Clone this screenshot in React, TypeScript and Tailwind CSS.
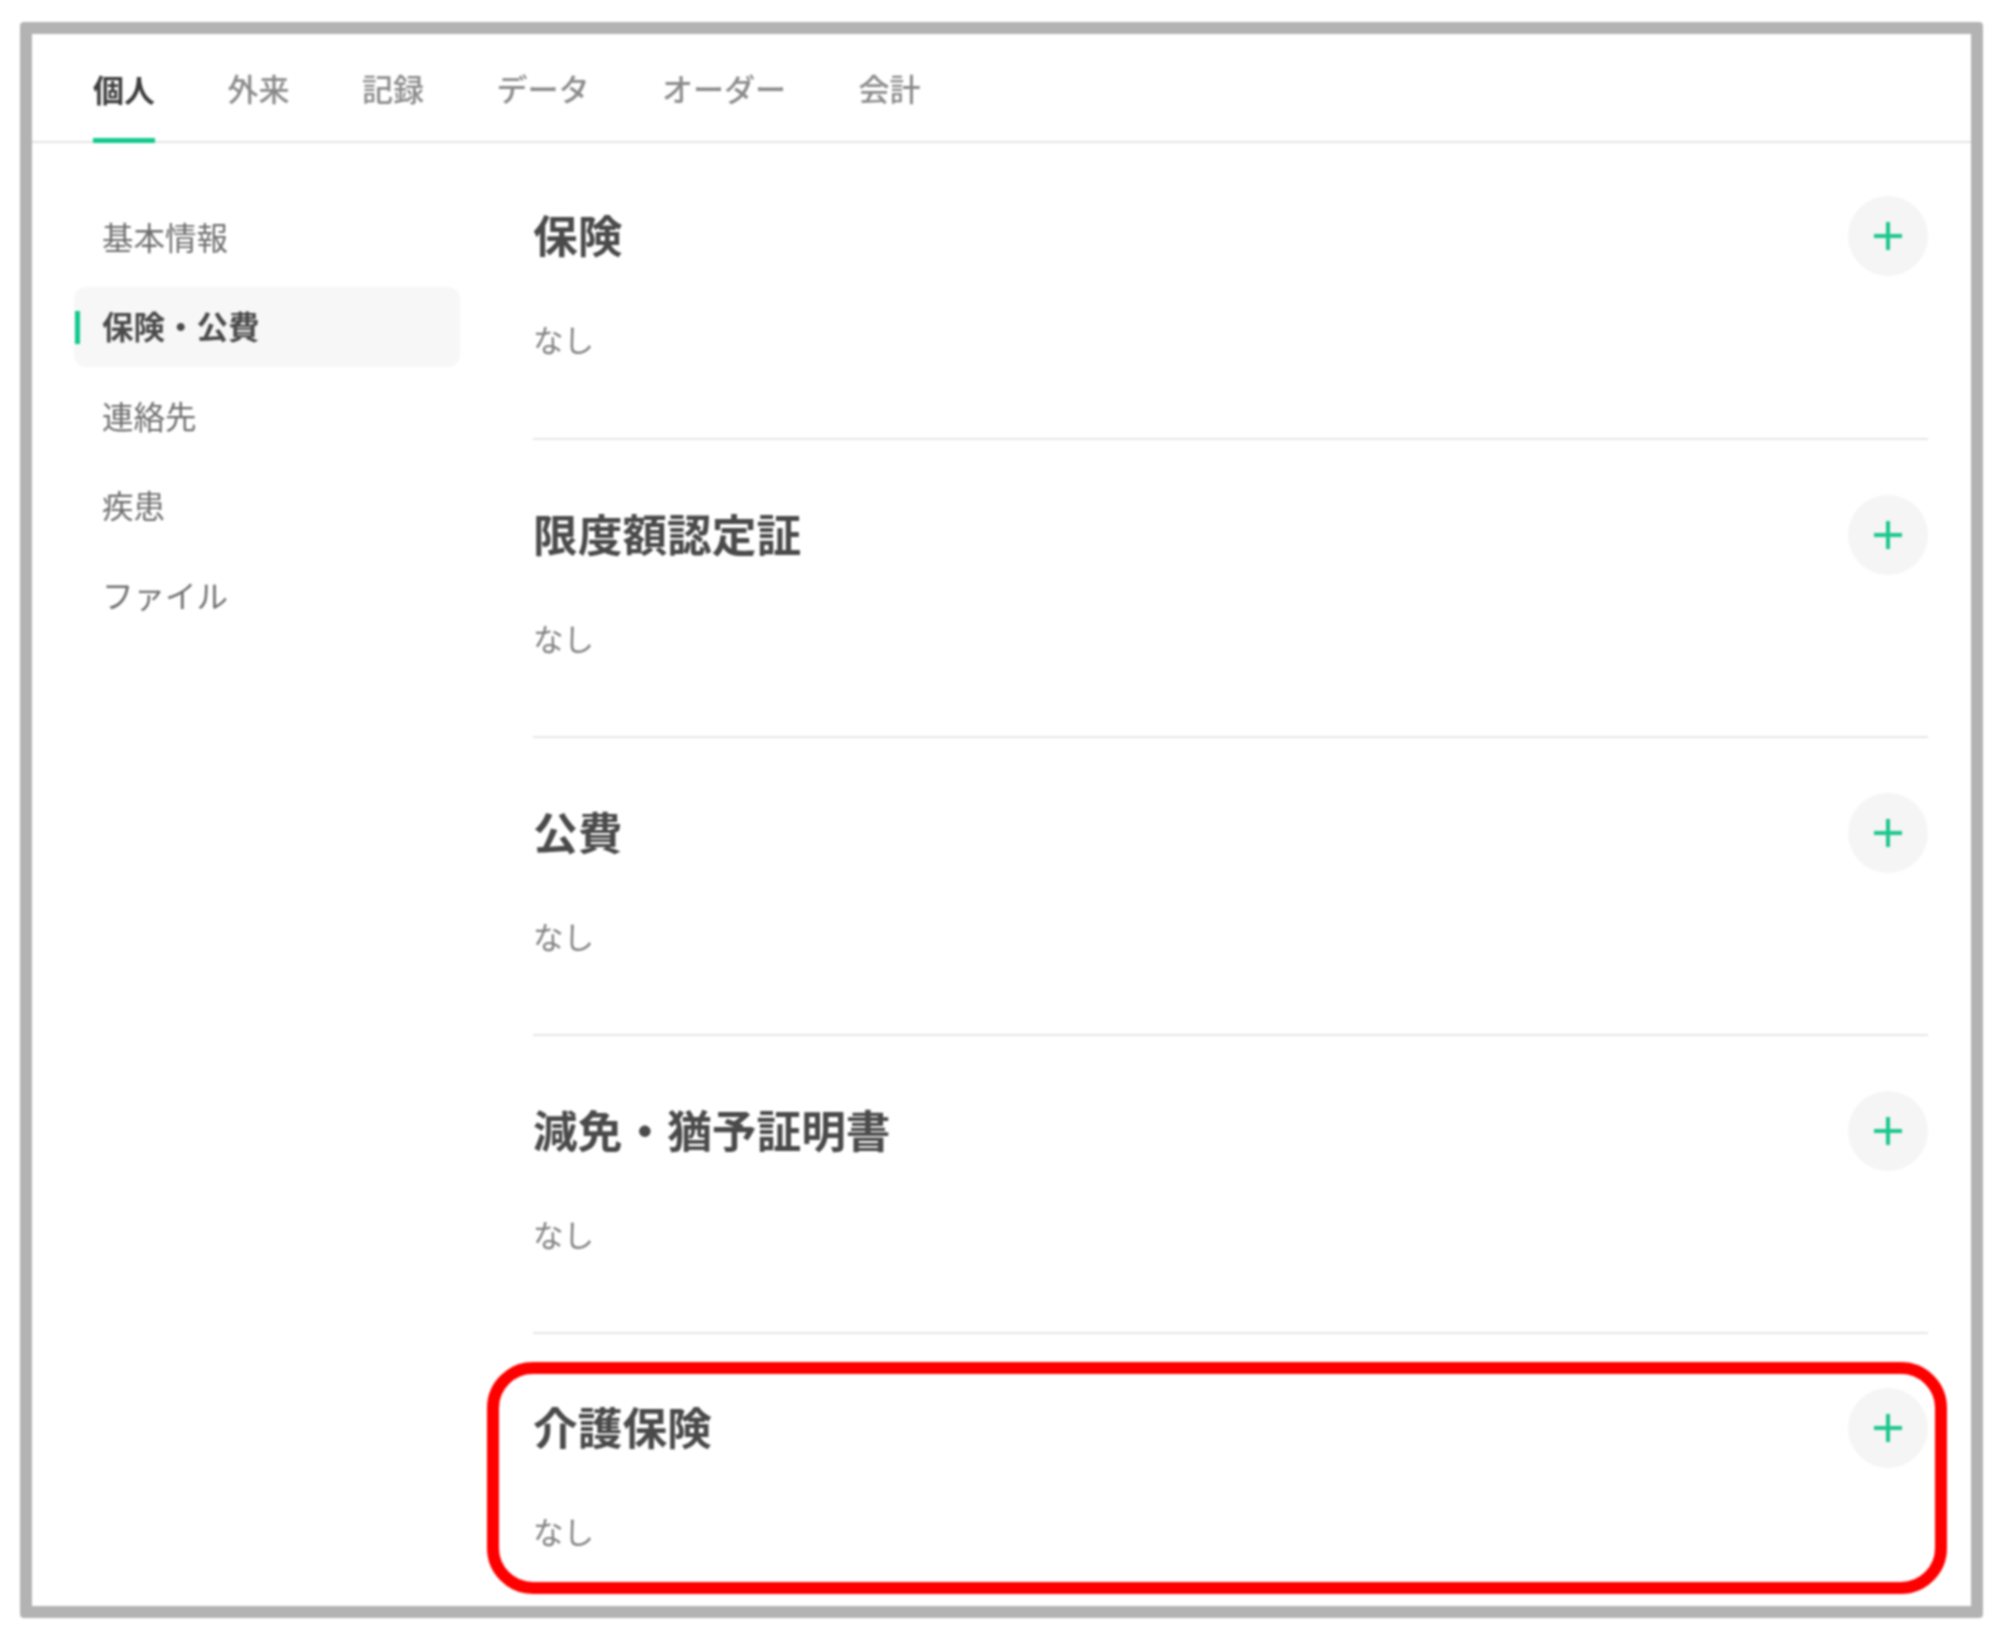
const tabs = ["個人", "外来", "記録", "データ", "オーダー", "会計"];
const side = ["基本情報", "保険・公費", "連絡先", "疾患", "ファイル"];
const sections = ["保険", "限度額認定証", "公費", "減免・猶予証明書", "介護保険"];

function Plus() {
  return (
    <button className="flex h-[80px] w-[80px] shrink-0 items-center justify-center rounded-full bg-[#f5f5f5]">
      <svg width="28" height="28" viewBox="0 0 28 28" fill="none" stroke="#1fc68f" strokeWidth="4">
        <path d="M14 0V28M0 14H28" />
      </svg>
    </button>
  );
}

export default function App() {
  return (
    <div
      className="relative h-[1638px] w-[2000px] overflow-hidden bg-white pl-[20px] pr-[17px] pt-[22px] blur-[0.8px]"
      style={{ fontFamily: '"Noto Sans CJK JP", "Noto Sans", sans-serif' }}
    >
      <div className="h-[1596px] rounded-[4px] border-[12px] border-[#b3b3b3] bg-white">
        <div className="flex h-[109px] gap-[72.5px] border-b-2 border-[#e4e4e4] pl-[61px]">
          {tabs.map((t, i) => (
            <div
              key={t}
              className={
                i === 0
                  ? "-mb-[2px] flex items-center border-b-[5px] border-[#12c98e] pt-[7px] text-[31px] font-bold text-[#3d3d3d]"
                  : "flex items-center pt-[2px] text-[31px] font-medium text-[#8a8a8a]"
              }
            >
              {t}
            </div>
          ))}
        </div>
        <div className="flex">
          <nav className="ml-[42px] flex w-[386px] shrink-0 flex-col gap-[9.5px] pt-[54px]">
            {side.map((s, i) => (
              <div
                key={s}
                className={
                  i === 1
                    ? "relative flex h-[80px] items-center rounded-[12px] bg-[#f7f7f7] pb-[1px] pl-[28px] text-[31.5px] font-bold text-[#4a4a4a]"
                    : "flex h-[80px] items-center pb-[1px] pl-[28px] text-[31.5px] text-[#6e6e6e]"
                }
              >
                {i === 1 && <span className="absolute left-[1px] top-[24px] h-[33px] w-[5px] bg-[#12c98e]" />}
                {s}
              </div>
            ))}
          </nav>
          <main className="ml-[73px] mr-[43px] flex-1">
            {sections.map((s, i) => (
              <section
                key={s}
                className={
                  i === 4
                    ? "h-[270px] pt-[54px]"
                    : i === 0
                      ? "h-[297px] border-b-2 border-[#e6e6e6] pt-[53px]"
                      : "h-[298px] border-b-2 border-[#e6e6e6] pt-[55px]"
                }
              >
                <div className="flex h-[80px] items-center justify-between">
                  <h2 className="pb-[3px] text-[44.7px] font-bold leading-none text-[#4a4a4a]">{s}</h2>
                  <Plus />
                </div>
                <p className="mt-[40px] text-[30.5px] leading-[46px] text-[#808080]">なし</p>
              </section>
            ))}
          </main>
        </div>
      </div>
      <div className="absolute left-[487px] top-[1362px] h-[232px] w-[1460px] rounded-[46px] border-[12px] border-[#ff0000]" />
    </div>
  );
}
